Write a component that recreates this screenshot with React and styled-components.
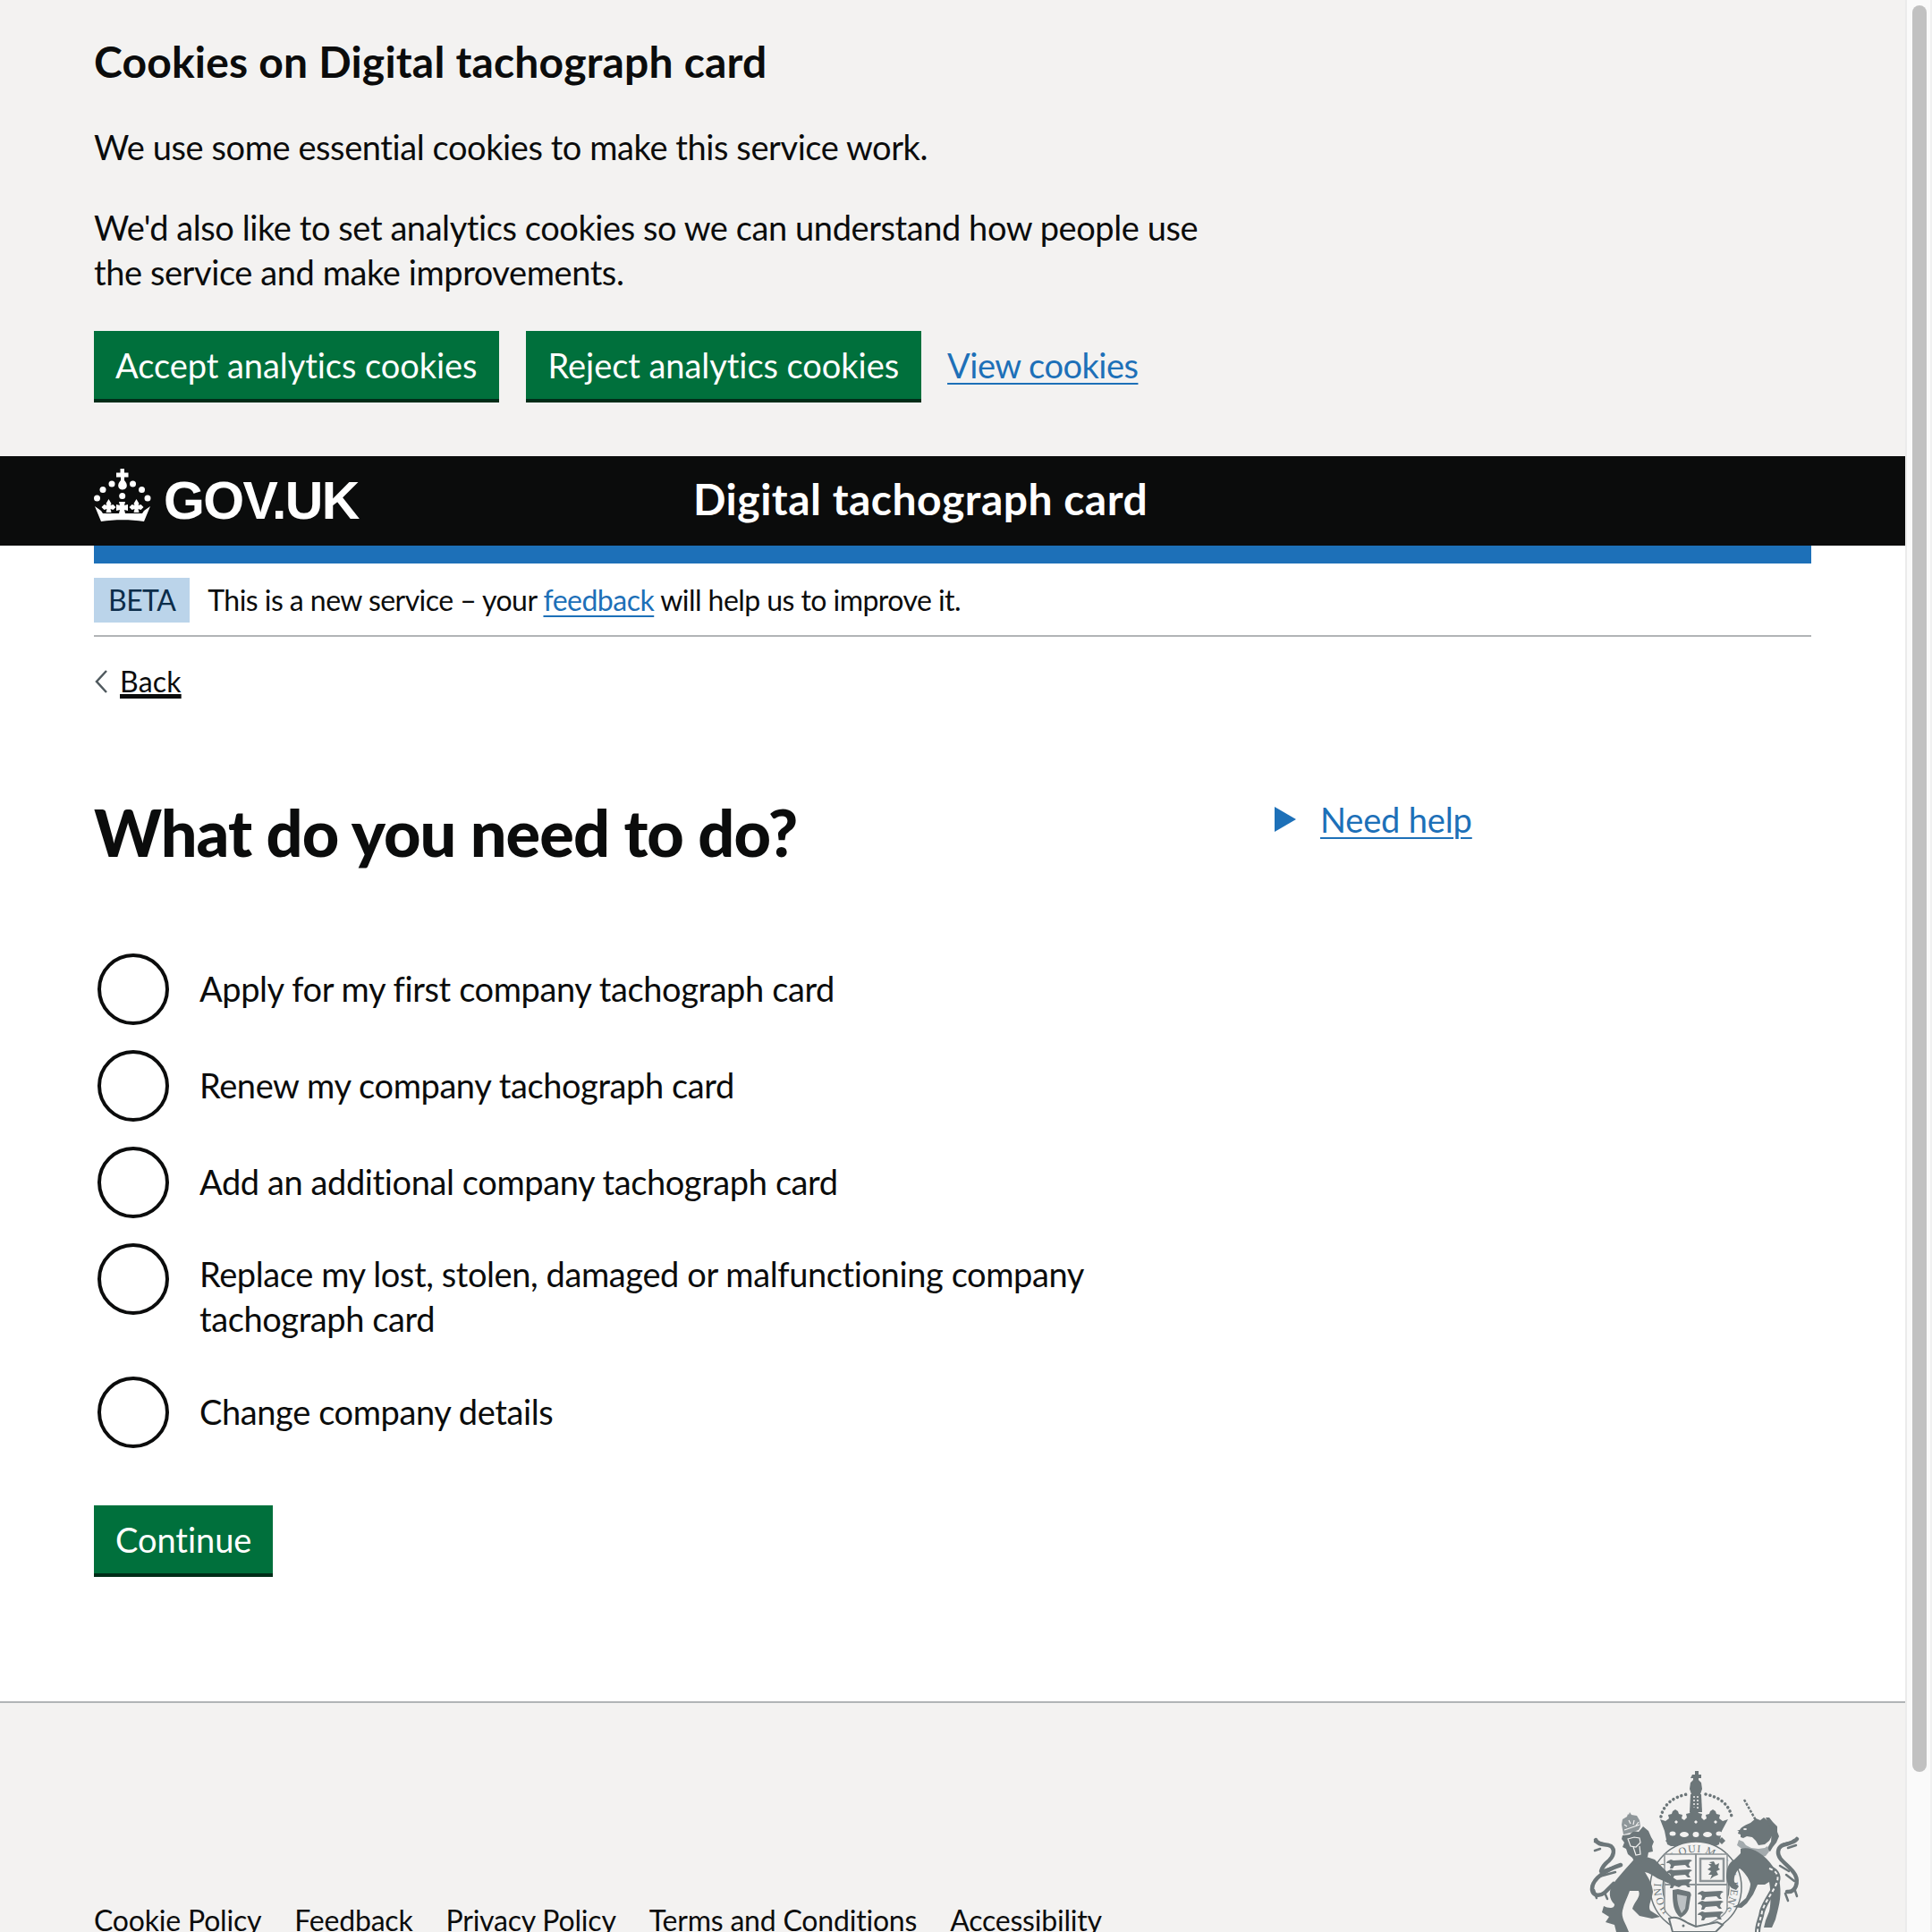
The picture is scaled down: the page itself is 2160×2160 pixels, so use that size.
import React from "react";
import styled, { createGlobalStyle } from "styled-components";

const Global = createGlobalStyle`
  html, body { margin: 0; padding: 0; height: 2160px; overflow: hidden; background: #fff; }
  body { font-family: Lato, "Liberation Sans", sans-serif; color: #0b0c0c; font-variant-ligatures: none; }
`;
const Shell = styled.div`display: flex; height: 2160px; overflow: hidden;`;
const Page = styled.div`width: 2130px; display: flex; flex-direction: column;`;
const Track = styled.div`width: 30px; box-sizing: border-box; background: #fafafa; border-left: 2px solid #ebebeb; border-right: 2px solid #f0f0f0; padding: 6px 4px 0 6px;`;
const Thumb = styled.div`width: 16px; height: 1975px; border-radius: 8px; background: #c1c1c1;`;
const Wrap = styled.div`width: 1920px; margin: 0 auto;`;
const Cookie = styled.section`background: #f3f2f1; padding: 39px 0 60px;`;
const CookieTitle = styled.h2`font-size: 48px; line-height: 60px; font-weight: 700; margin: 0 0 40px; letter-spacing: 0.2px;`;
const Para = styled.p`
  font-size: 38px; line-height: 50px; margin: 0 0 40px; max-width: 1280px; letter-spacing: -0.42px;
  &:last-of-type { margin-bottom: 41px; }
`;
const Actions = styled.div`display: flex; align-items: center; gap: 30px;`;
const Button = styled.button`
  font: inherit; font-size: 38px; line-height: 50px; color: #fff; background: #00703c; border: 0;
  box-shadow: 0 4px 0 #002d18; height: 76px; padding: 0 ${p => p.$pad || 24}px; margin-bottom: 4px; cursor: pointer; letter-spacing: -0.05px;
`;
const A = styled.a`color: #1d70b8; text-decoration: underline; text-decoration-thickness: 2px; text-underline-offset: 5px; font-size: 38px; letter-spacing: -0.5px;`;
const CookieLink = styled(A)`margin: 0 0 4px -1px;`;
const HelpLink = styled(A)`letter-spacing: -0.15px;`;
const FeedbackLink = styled(A)`font-size: 32px;`;
const Header = styled.header`background: #0b0c0c; height: 100px;`;
const HeaderRow = styled(Wrap)`display: flex; align-items: center; height: 100%;`;
const Logo = styled.div`width: 670px; display: flex; align-items: center; gap: 14px; color: #fff;`;
const CrownMark = styled.svg`margin-top: -12px; fill: #fff;`;
const LogoText = styled.span`font-family: "Liberation Sans", sans-serif; font-weight: 700; font-size: 59px; letter-spacing: -1.6px;`;
const Service = styled.div`color: #fff; font-size: 48px; font-weight: 700; letter-spacing: 0.5px; padding-bottom: 5px;`;
const Blue = styled(Wrap)`height: 20px; background: #1d70b8;`;
const Phase = styled(Wrap)`display: flex; align-items: center; gap: 20px; padding: 16px 0 14px; border-bottom: 2px solid #b1b4b6; font-size: 32px; line-height: 40px; letter-spacing: -0.55px;`;
const Tag = styled.strong`background: #bbd4ea; color: #0c2d4a; font-weight: 400; padding: 5px 16px; font-size: 32px;`;
const Back = styled.a`display: flex; align-items: center; gap: 12px; margin-top: 30px; color: #0b0c0c; font-size: 32px; line-height: 40px; letter-spacing: 0.2px; span { text-decoration: underline; text-underline-offset: 5px; text-decoration-thickness: 2px; }`;
const Main = styled(Wrap)`flex: 1; display: flex;`;
const Left = styled.div`width: 1320px;`;
const H1 = styled.h1`font-size: 72px; line-height: 100px; font-weight: 900; margin: 98px 0 82px; letter-spacing: -0.9px;`;
const Help = styled.div`display: flex; align-items: center; gap: 27px; margin-top: 109px; height: 50px;`;
const Item = styled.label`display: flex; align-items: flex-start; margin-bottom: 20px;`;
const Circle = styled.span`flex: none; width: 80px; height: 80px; box-sizing: border-box; border: 4px solid #0b0c0c; border-radius: 50%; margin: 4px 34px 0 4px;`;
const ItemText = styled.span`display: flex; align-items: center; min-height: 59px; padding: 13px 0 16px; width: 1060px; font-size: 38px; line-height: 50px; letter-spacing: -0.4px;`;
const SubmitRow = styled.div`margin-top: 60px;`;
const Footer = styled.footer`background: #f3f2f1; border-top: 2px solid #b1b4b6; height: 256px; overflow: hidden;`;
const FooterRow = styled(Wrap)`display: flex; justify-content: space-between; align-items: flex-start;`;
const Links = styled.nav`display: flex; gap: 37px; padding-top: 223px; font-size: 32px; line-height: 40px; letter-spacing: -0.2px; a { color: #0b0c0c; text-decoration: underline; text-underline-offset: 5px; }`;
const CrestBox = styled.div`padding: 71px 5px 0 0; line-height: 0;`;

const Fleur = ({ x }) => (
  <path d={`M${x} 34l3 5-1 2 3-1 3 3-3 3-3-1 1 4h-6l1-4-3 1-3-3 3-3 3 1-1-2z`} />
);

const Crown = () => (
  <CrownMark width="64" height="60" viewBox="0 0 64 60">
    <path d="M29.5 0h4.500v4.500h4.500v5H34v3.500c2 2 3.400 5 2.600 7.500-.8 2-2.800 3-4.800 3s-3.600-1-4.400-3c-.8-2.500.6-5.500 2.600-7.500V9.500H25v-5h4.500z" />
    <circle cx="3.500" cy="33" r="3.500" /><circle cx="10" cy="23.500" r="3.500" /><circle cx="20" cy="17" r="3.500" />
    <circle cx="43.500" cy="17" r="3.500" /><circle cx="53.500" cy="23.500" r="3.500" /><circle cx="60" cy="33" r="3.500" />
    <circle cx="31.700" cy="30.500" r="3.500" />
    <Fleur x={16.500} /><Fleur x={47.500} />
    <path d="M28 37h7l-1 4 4-1v7l-4-1 1 4h-7l1-4-4 1v-7l4 1z" />
    <path d="M1 42l7 5 2 3h44l2-3 7-5-7 17c-15-2.500-33-2.500-48 0z" />
  </CrownMark>
);

const Lions = ({ x, ys, w }) => (
  <g>
    {ys.map(y => (
      <path key={y} d={`M${x} ${y}l4-2 3 1 ${w - 10} -1 3 1-3 2-1 3 2 3-3 0-3-3-${w - 16} 1-2 3-3 0 1-4-2-2-3 0z`} />
    ))}
  </g>
);

const Crest = () => (
  <svg width="250" height="185" viewBox="0 0 250 185" fill="#6c7679">
    <defs>
      <path id="garter" d="M97 161A39 39 0 1 1 155 161" />
    </defs>
    {/* mantling */}
    <g fill="none" stroke="#6c7679" strokeWidth="4.500" strokeLinecap="round">
      <path d="M14 82c3 7 11 4 17 7 5 4 3 11-2 16-5 4-8 8-9 12" />
      <path d="M42 110c-15 5-33 15-32 28 1 7 9 7 14 3l10-10" />
      <path d="M239 81c-6 8-20 3-21 14-1 10 13 15 19 26 4 8 1 20-9 19" />
    </g>
    <g fill="none" stroke="#6c7679" strokeWidth="2.500" strokeLinecap="round">
      <path d="M22 86l-9-2M19 92l-6 2M20 117l16-5M18 123l18-5M12 138l3 9M24 141l3 7" />
      <path d="M236 82c-5 5-11 3-15 6M238 88l-9 3M230 117l-10-6M236 128l-9-7M236 136l3 9M226 142l3 8" />
    </g>
    {/* crown */}
    <path d="M123 7h3V3h4v4h3v4h-3v2l3 3 1 7-2 6h-10l-2-6 1-7 3-3v-2h-3z" transform="translate(-1 2)" />
    <path d="M120 31h12l1 20h-14z" />
    <path d="M124 33v16M128 33v16" stroke="#f3f2f1" strokeWidth="1.500" strokeDasharray="2 2" />
    <path d="M87 56C90 42 101 34 116 31M137 31c15 3 26 11 29 25" fill="none" stroke="#6c7679" strokeWidth="3.500" strokeDasharray="0.100 4.800" strokeLinecap="round" />
    <path d="M86 59l6 2 4-3-1-4 4-1 1-3 3-2 3 2 1 3 4 1-1 4 3 2 3-3-1-4 4-1 2-4 3-3 3 3 2 4 4 1-1 4 3 3 3-2-1-4 4-1 1-3 3-2 3 2 1 3 4 1-1 4 4 3 6-2-7 13-3 15-4 2-50 0-4-2-3-15z" />
    <g fill="#f3f2f1">
      <ellipse cx="100" cy="75" rx="3.500" ry="2.500" /><ellipse cx="113" cy="76" rx="5" ry="3" /><ellipse cx="126" cy="76" rx="3.500" ry="3" />
      <ellipse cx="139" cy="76" rx="5" ry="3" /><ellipse cx="152" cy="75" rx="3.500" ry="2.500" />
      <path d="M104 60l2 2-2 2-2-2zM126 60l2 2-2 2-2-2zM148 60l2 2-2 2-2-2z" />
    </g>
    <path d="M96 79l4 4-4 4-4-4zM155 79l4 4-4 4-4-4z" />
    {/* garter */}
    <circle cx="126" cy="135" r="51" fill="#f3f2f1" stroke="#6c7679" strokeWidth="1.500" />
    <circle cx="126" cy="135" r="37" fill="none" stroke="#6c7679" strokeWidth="1.500" />
    <text fontFamily="Liberation Serif, serif" fontSize="12" fill="#6c7679" letterSpacing="0.900">
      <textPath href="#garter">HONI SOIT QUI MAL Y PENSE</textPath>
    </text>
    {/* shield */}
    <path d="M91 98h70v60c0 8-14 16-35 24-21-8-35-16-35-24z" fill="#f3f2f1" stroke="#8d9497" strokeWidth="1.500" />
    <path d="M126 98v84M91 132h70" stroke="#8d9497" strokeWidth="2" />
    <Lions x={94} ys={[106, 117, 128]} w={28} />
    <Lions x={129} ys={[141, 152, 164]} w={28} />
    <rect x="131" y="103" width="26" height="25" fill="none" stroke="#8d9497" strokeWidth="2.500" />
    <path d="M141 107l5-1 2 4 4-2-1 5 2 2-4 2 2 4-5 2-4 3 2-5-4 0 3-4-4-2 4-3-3-3 4 0z" />
    <path d="M100 138l6-1 13 3c2 2 2 4 1 6l-2 13c-2 6-6 8-9 10-4-3-7-8-8-14-1-5-1-11-1-17z" />
    <path d="M105 143l11 2-2 14-4 5c-3-6-5-12-5-21z" fill="#bcc1c3" />
    <path d="M96 170c7-3 13 0 21 5l9 4 24-5 6 3-8 8H100z" fill="#f3f2f1" stroke="#6c7679" strokeWidth="2" />
    <circle cx="112" cy="178" r="1.500" />
    {/* lion */}
    <path d="M60 100C50 112 40 122 33 132c-5 8-4 16 2 22 0 6-8 4-12 2l-2 7 8 5-4 6 10 3 2 8h14c-3-9-9-16-7-24 2-9 6-16 8-22l10 0c3 7-5 12-7 20l8 8 14 3 9-2-11-7c-3-5 2-13 3-21-1-10-6-17-9-22 5 1 9 4 14 7l16 7 8 3 5-3-13-9-11-11-8-8-9-3z" />
    <path d="M44 77l8-1 4-4 6 1 5-6 6 5 3 7 3 5-2 5 1 6-5 1-1 5-5 0-2 6-6 3-4-8-5-4-2-6-4-2 2-5-3-4z" />
    <path d="M43 65l1-6 5-3 1-3 1 1 1-3 2 3 6 1 3 5 1 7-2 4-9 3-8 2z" fill="#8f979a" />
    <g fill="none" stroke="#f3f2f1" strokeWidth="1.200">
      <path d="M50 81l7-2 6 1 1 5-5 5-6-1zM56 90l3 9 5-1-1-9" />
      <path d="M46 65l3 2M51 60l2 4M57 60l-1 5M62 62l-3 4M46 71l17-6" />
    </g>
    {/* unicorn */}
    <path d="M180 37l13 23" fill="none" stroke="#6c7679" strokeWidth="2.500" strokeDasharray="3 1.500" />
    <path d="M175 71c2-4 8-6 12-8l6-5 5 2 4-3 6 5 4 3 1 9-5 9-5 4-7 1-3-5-4-4-6-1-4 2-3-1 0-3-3-1 1-3-2-1z" />
    <path d="M204 57l4 0 4 5 5 5 0 6 2 5-3 7-4 5-3 5-4-2 5-9 1-12z" />
    <ellipse cx="181" cy="70" rx="2" ry="1" fill="#f3f2f1" />
    <path d="M174 82l5 2 3 4 6 3 8 1 7-1 3-2 2 6-4 5-4 1-10-4-8-2-6-4-4-3z" fill="#a3aaad" />
    <path d="M176 97l-7 7c-6 3-9 10-9 19 0 6 3 10 6 13l5 2 3-4-5-5c-1-6 2-12 6-15 5 4 10 10 12 17 0 5-3 12-5 16l-8 7-7 3 10 1 6-5 7-10 5-11 8 0 5-3c2 12 2 24 0 33l-4 10-2 8 9 0 4-9c3-12 7-24 5-39-2-14-11-28-24-36-6-4-14-6-20-4z" />
    <g fill="none">
      <path d="M208 114c7 2 11 7 9 14-3 11-13 21-17 34-1 8-5 14-5 23" stroke="#6c7679" strokeWidth="6" />
      <path d="M208 114c7 2 11 7 9 14-3 11-13 21-17 34-1 8-5 14-5 23" stroke="#f3f2f1" strokeWidth="2" strokeDasharray="4 3" />
    </g>
  </svg>
);

const options = [
  "Apply for my first company tachograph card",
  "Renew my company tachograph card",
  "Add an additional company tachograph card",
  "Replace my lost, stolen, damaged or malfunctioning company tachograph card",
  "Change company details",
];

export default function App() {
  return (
    <Shell>
      <Global />
      <Page>
        <Cookie>
          <Wrap>
            <CookieTitle>Cookies on Digital tachograph card</CookieTitle>
            <Para>We use some essential cookies to make this service work.</Para>
            <Para>We'd also like to set analytics cookies so we can understand how people use the service and make improvements.</Para>
            <Actions>
              <Button>Accept analytics cookies</Button>
              <Button $pad={25}>Reject analytics cookies</Button>
              <CookieLink href="#">View cookies</CookieLink>
            </Actions>
          </Wrap>
        </Cookie>
        <Header>
          <HeaderRow>
            <Logo><Crown /><LogoText>GOV.UK</LogoText></Logo>
            <Service>Digital tachograph card</Service>
          </HeaderRow>
        </Header>
        <Blue />
        <Phase>
          <Tag>BETA</Tag>
          <span>This is a new service – your <FeedbackLink href="#">feedback</FeedbackLink> will help us to improve it.</span>
        </Phase>
        <Wrap>
          <Back href="#">
            <svg width="17" height="26" viewBox="0 0 17 26" fill="none" stroke="#505a5f" strokeWidth="2.500"><path d="M14 1L3 13l11 12" /></svg>
            <span>Back</span>
          </Back>
        </Wrap>
        <Main>
          <Left>
            <H1>What do you need to do?</H1>
            {options.map(t => (
              <Item key={t}><Circle /><ItemText>{t}</ItemText></Item>
            ))}
            <SubmitRow><Button>Continue</Button></SubmitRow>
          </Left>
          <Help>
            <svg width="24" height="28" viewBox="0 0 24 28" fill="#1d70b8"><path d="M0 0l24 14L0 28z" /></svg>
            <HelpLink href="#">Need help</HelpLink>
          </Help>
        </Main>
        <Footer>
          <FooterRow>
            <Links>
              <a href="#">Cookie Policy</a><a href="#">Feedback</a><a href="#">Privacy Policy</a><a href="#">Terms and Conditions</a><a href="#">Accessibility</a>
            </Links>
            <CrestBox><Crest /></CrestBox>
          </FooterRow>
        </Footer>
      </Page>
      <Track><Thumb /></Track>
    </Shell>
  );
}
